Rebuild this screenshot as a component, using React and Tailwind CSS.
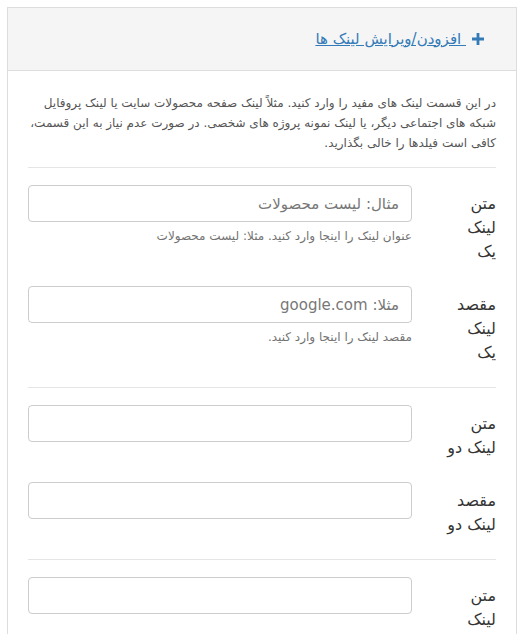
import React from "react";

const rows = [
  {
    label: ["متن", "لینک", "یک"],
    placeholder: "مثال: لیست محصولات",
    help: "عنوان لینک را اینجا وارد کنید. مثلا: لیست محصولات",
  },
  {
    label: ["مقصد", "لینک", "یک"],
    placeholder: "مثلا: google.com",
    help: "مقصد لینک را اینجا وارد کنید.",
    divider: true,
  },
  { label: ["متن", "لینک دو"] },
  { label: ["مقصد", "لینک دو"], divider: true },
  { label: ["متن", "لینک", "سه"] },
];

function Row({ row }) {
  return (
    <>
      <div className="flex items-start mb-[17px]">
        <div className="w-[68px] shrink-0 pt-[7px] pb-[5px] text-[16px] leading-[24px] text-[#333]">
          {row.label.map((l, i) => (
            <div key={i}>{l}</div>
          ))}
        </div>
        <div className="w-[384px] mr-[16px]">
          <input
            type="text"
            placeholder={row.placeholder || ""}
            className="block w-full h-[37px] rounded-[4px] border border-[#ccc] bg-white px-3 text-[15px] placeholder:text-[#777] outline-none"
          />
          {row.help && (
            <p className="mt-[5px] text-[12px] leading-[18px] text-[#737373]">{row.help}</p>
          )}
        </div>
      </div>
      {row.divider && <hr className="border-t border-[#e5e5e5] mb-[17px]" />}
    </>
  );
}

export default function App() {
  return (
    <div className="bg-white h-[634px] overflow-hidden pt-[7px] pl-[7px] pr-[7px]" style={{ fontFamily: '"DejaVu Sans", "Noto Sans", sans-serif' }}>
      <div dir="rtl" className="w-[510px] border border-[#ddd]">
        <div className="h-[63px] bg-[#f5f5f5] border-b border-[#ddd] flex items-center pr-[32px]">
          <a href="#" className="flex items-center text-[#337ab7] text-[15px] underline">
            <svg width="12" height="12" viewBox="0 0 12 12" className="ml-[2px]">
              <path d="M4.6 0h2.8v4.6H12v2.8H7.4V12H4.6V7.4H0V4.6h4.6z" fill="#337ab7" />
            </svg>
            <span className="pr-[4px]">&nbsp;افزودن/ویرایش لینک ها</span>
          </a>
        </div>
        <div className="px-[20px] pt-[22px]">
          <p className="text-[12px] leading-[20px] text-[#555] mb-[14px] whitespace-nowrap">
            در این قسمت لینک های مفید را وارد کنید. مثلاً لینک صفحه محصولات سایت یا لینک پروفایل
            <br />
            شبکه های اجتماعی دیگر، یا لینک نمونه پروژه های شخصی. در صورت عدم نیاز به این قسمت،
            <br />
            کافی است فیلدها را خالی بگذارید.
          </p>
          <hr className="border-t border-[#e5e5e5] mb-[17px]" />
          {rows.map((r, i) => (
            <Row key={i} row={r} />
          ))}
        </div>
      </div>
    </div>
  );
}
